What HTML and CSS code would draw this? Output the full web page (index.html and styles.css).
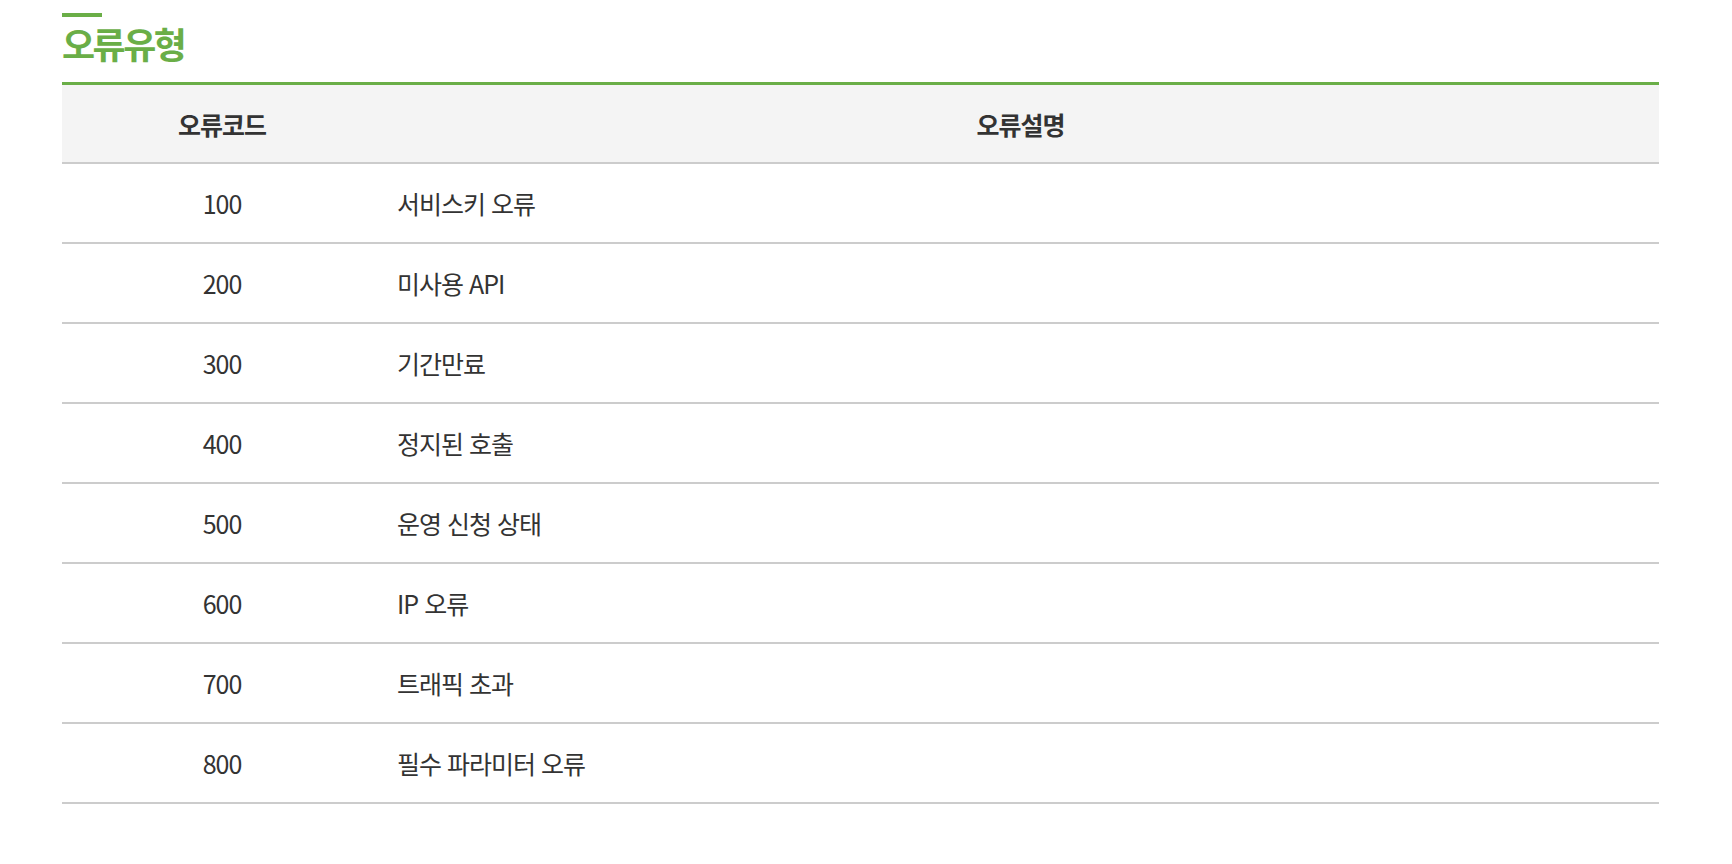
FILE: index.html
```html
<!DOCTYPE html>
<html lang="ko">
<head>
<meta charset="utf-8">
<title>오류유형</title>
<link rel="stylesheet" href="styles.css">
</head>
<body>
<section class="section">
  <h2 class="title">오류유형</h2>
  <table class="err">
    <colgroup><col class="c-code"><col class="c-desc"></colgroup>
    <thead>
      <tr><th>오류코드</th><th>오류설명</th></tr>
    </thead>
    <tbody>
      <tr><td class="code">100</td><td class="desc">서비스키 오류</td></tr>
      <tr><td class="code">200</td><td class="desc">미사용 API</td></tr>
      <tr><td class="code">300</td><td class="desc">기간만료</td></tr>
      <tr><td class="code">400</td><td class="desc">정지된 호출</td></tr>
      <tr><td class="code">500</td><td class="desc">운영 신청 상태</td></tr>
      <tr><td class="code">600</td><td class="desc">IP 오류</td></tr>
      <tr><td class="code">700</td><td class="desc">트래픽 초과</td></tr>
      <tr><td class="code">800</td><td class="desc">필수 파라미터 오류</td></tr>
    </tbody>
  </table>
</section>
</body>
</html>
```
FILE: styles.css
```css
html, body {
  margin: 0;
  padding: 0;
  background: #fff;
}
body {
  font-family: "Noto Sans CJK KR", "Noto Sans", sans-serif;
  color: #333;
}
.section {
  width: 1597px;
  padding: 13px 0 0 62px;
}
.title {
  margin: 0;
  font-size: 36px;
  font-weight: 700;
  line-height: 48px;
  letter-spacing: -2.5px;
  color: #6aae47;
}
.title::before {
  content: "";
  display: block;
  width: 40px;
  height: 4px;
  margin-bottom: 2px;
  background: #6aae47;
}
.err {
  width: 100%;
  margin-top: 15px;
  border-collapse: collapse;
  border-top: 3px solid #6aae47;
  table-layout: fixed;
}
.c-code { width: 320px; }
.err th {
  height: 77px;
  padding: 0;
  background: #f4f4f4;
  border-bottom: 2px solid #ccc;
  font-size: 25px;
  font-weight: 700;
  letter-spacing: -1px;
  text-align: center;
  color: #333;
}
.err td {
  height: 78px;
  padding: 0;
  border-bottom: 2px solid #ccc;
  font-size: 25px;
  letter-spacing: -1px;
  color: #333;
}
.err td.code {
  text-align: center;
}
.err td.desc {
  padding-left: 15px;
  text-align: left;
}
```
